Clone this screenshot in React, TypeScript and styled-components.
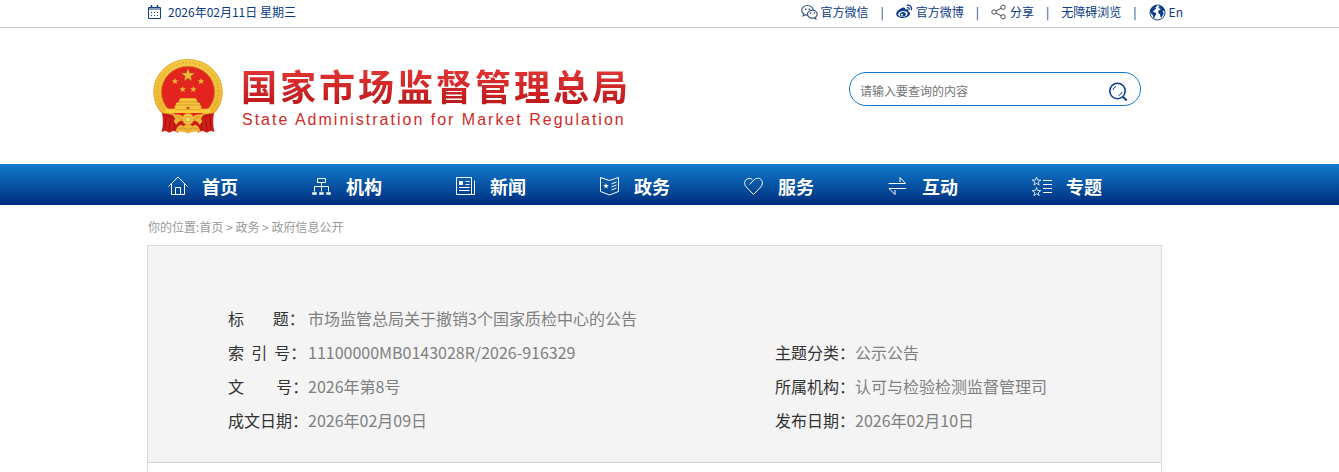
import React from "react";
import styled, { createGlobalStyle } from "styled-components";

const GlobalStyle = createGlobalStyle`
  * { box-sizing: border-box; }
  body {
    margin: 0;
    background: #fff;
    font-family: "Noto Sans CJK SC", sans-serif;
    font-size: 12px;
    color: #333;
  }
  a { color: inherit; text-decoration: none; }
  svg { display: block; flex: none; }
`;

const Page = styled.div`
  display: flex;
  flex-direction: column;
  min-height: 100vh;
`;

const Container = styled.div`
  width: 100%;
  max-width: 1045px;
  margin: 0 auto;
  padding-left: 1px;
`;

const TopBar = styled.div`
  border-bottom: 1px solid #c8c8c8;
  color: #0a3a85;
  line-height: 24px;
  padding-bottom: 3px;
`;

const TopInner = styled(Container)`
  display: flex;
  justify-content: space-between;
  padding-right: 9px;
`;

const DateText = styled.div`
  display: flex;
  align-items: center;
  gap: 7px;
`;

const QuickLinks = styled.nav`
  display: flex;
  align-items: center;
`;

const QuickLink = styled.a`
  display: flex;
  align-items: center;
  gap: 3px;
`;

const Divider = styled.span`
  padding: 0 12px;
`;

const Header = styled(Container)`
  display: flex;
  align-items: flex-start;
  justify-content: space-between;
  height: 136px;
  padding: 30px 51px 0 5px;
`;

const Brand = styled.a`
  display: flex;
  gap: 17px;
`;

const BrandText = styled.div`
  padding-top: 3px;
`;

const BrandName = styled.h1`
  margin: 0;
  font-size: 36px;
  line-height: 48px;
  font-weight: 700;
  letter-spacing: 3px;
  color: transparent;
  background: linear-gradient(#e23434 20%, #bd1a1c 90%);
  -webkit-background-clip: text;
  background-clip: text;
`;

const BrandSub = styled.p`
  margin: 0;
  padding: 1px 0 0 1px;
  font-family: "Liberation Sans", Arial, sans-serif;
  font-size: 16px;
  line-height: 20px;
  letter-spacing: 2px;
  color: #d02a28;
`;

const SearchForm = styled.form`
  display: flex;
  align-items: center;
  width: 292px;
  height: 34px;
  margin-top: 14px;
  padding: 0 12px 0 10px;
  border: 1px solid #1478c8;
  border-radius: 17px;
`;

const SearchInput = styled.input`
  flex: 1;
  min-width: 0;
  padding: 2px 0 0;
  border: 0;
  outline: 0;
  background: none;
  font: inherit;
  &::placeholder { color: #757575; }
`;

const SearchButton = styled.button`
  padding: 5px 0 0;
  border: 0;
  background: none;
  cursor: pointer;
`;

const NavBar = styled.nav`
  background: linear-gradient(#107bcd, #002d7c);
`;

const NavInner = styled(Container)`
  display: flex;
`;

const NavItem = styled.a`
  display: flex;
  align-items: center;
  gap: 14px;
  width: 144px;
  height: 41px;
  padding: 3px 0 0 20px;
  color: #fff;
  font-size: 18px;
  font-weight: 700;
`;

const Crumbs = styled(Container)`
  padding: 12px 0 8px 1px;
  line-height: 20px;
  color: #999;
`;

const Main = styled(Container)`
  display: flex;
  flex: 1;
  padding: 0 30px 0 0;
`;

const Panel = styled.main`
  flex: 1;
  border: 1px solid #d3dae5;
  border-bottom: 0;
`;

const Info = styled.dl`
  display: grid;
  grid-template-columns: 547px 1fr;
  margin: 0;
  padding: 55px 20px 25px 80px;
  background: #f4f4f4;
  border-bottom: 1px solid #d0d3d6;
  font-size: 16px;
  line-height: 34px;
`;

const Field = styled.div<{ $wide?: boolean }>`
  display: grid;
  grid-template-columns: 80px 1fr;
  grid-column: ${(p) => (p.$wide ? "1 / -1" : "auto")};
`;

const Label = styled.dt`
  white-space: pre;
  color: #333;
`;

const Value = styled.dd`
  margin: 0;
  color: #808080;
`;

const fields = [
  { label: `标${"\u00a0".repeat(8)}题：`, value: "市场监管总局关于撤销3个国家质检中心的公告", wide: true },
  { label: "索\u00a0\u00a0引\u00a0\u00a0号：", value: "11100000MB0143028R/2026-916329" },
  { label: "主题分类：", value: "公示公告" },
  { label: `文${"\u00a0".repeat(9)}号：`, value: "2026年第8号" },
  { label: "所属机构：", value: "认可与检验检测监督管理司" },
  { label: "成文日期：", value: "2026年02月09日" },
  { label: "发布日期：", value: "2026年02月10日" },
];

const star = (cx: number, cy: number, r: number) =>
  Array.from({ length: 10 }, (_, i) => {
    const a = (Math.PI / 5) * i - Math.PI / 2;
    const q = i % 2 ? r * 0.4 : r;
    return `${(cx + q * Math.cos(a)).toFixed(1)},${(cy + q * Math.sin(a)).toFixed(1)}`;
  }).join(" ");

const Emblem = () => (
  <svg width="72" height="76" viewBox="20 22 216 228" aria-hidden="true">
    <defs>
      <linearGradient id="gold" x1="0" y1="0" x2="0" y2="1">
        <stop offset="0" stopColor="#f5cc48" />
        <stop offset="1" stopColor="#eab02c" />
      </linearGradient>
    </defs>
    <ellipse cx="128" cy="124" rx="104" ry="99" fill="url(#gold)" />
    <ellipse cx="128" cy="122" rx="91" ry="86" fill="none" stroke="#e0a52a" strokeWidth="5" strokeDasharray="4 6" />
    <ellipse cx="128" cy="124" rx="103" ry="98" fill="none" stroke="#dba02a" strokeWidth="2" />
    <ellipse cx="128" cy="124" rx="80" ry="77" fill="#e3231d" stroke="#c98a1e" strokeWidth="2" />
    <polygon points={star(128, 74, 21)} fill="#ecc03c" stroke="#a86a1a" strokeWidth="1.500" />
    {[[89, 92], [167, 92], [112, 116], [144, 116]].map(([x, y]) => (
      <polygon key={x} points={star(x, y, 11)} fill="#e8b436" />
    ))}
    <path d="M100 150L105 143H151L156 150L154 154H102ZM92 158L98 154H158L164 158V164H92ZM88 164H168V178H88Z" fill="#f6c73e" />
    <path d="M98 154H158M92 163H164" stroke="#b5691a" strokeWidth="1.500" />
    <path d="M123 176V171Q128 166 133 171V176Z" fill="#c1401a" />
    <path d="M60 174H196V187H60Z" fill="#fbcb3c" />
    <path d="M88 177H168" stroke="#d18a20" strokeWidth="2" />
    <path d="M50 188Q72 190 86 194Q104 206 128 208T170 194Q184 190 206 188L204 200Q202 230 208 244L196 240L184 246L172 240L158 246L154 230Q142 226 128 226T102 230L98 246L84 240L72 246L60 240L48 244Q54 230 52 200Z" fill="#d11d19" />
    <path d="M62 200L58 236M76 206L70 240M88 212L85 238M194 200L198 236M180 206L186 240M168 212L171 238M58 192Q76 202 92 200M198 192Q180 202 164 200" fill="none" stroke="#9f1111" strokeWidth="3" />
    <path d="M82 194Q100 188 114 198L110 210Q98 210 94 222Q80 212 90 204ZM174 194Q156 188 142 198L146 210Q158 210 162 222Q176 212 166 204Z" fill="#efb836" />
    <path d="M92 197Q104 198 108 208M164 197Q152 198 148 208" fill="none" stroke="#c8821f" strokeWidth="2" />
    <circle cx="128" cy="205" r="17" fill="#f4c443" stroke="#d69a2c" strokeWidth="2" />
    <circle cx="128" cy="206" r="8" fill="#f9d66a" stroke="#cb8a26" strokeWidth="2" />
    <path d="M94 234Q102 218 114 226Q128 216 142 226Q154 218 162 234L166 243Q146 240 128 248Q110 240 90 243Z" fill="#ecb637" />
    <path d="M100 236Q116 226 128 240Q140 226 156 236" fill="none" stroke="#c17b1c" strokeWidth="2" />
  </svg>
);

const CalendarIcon = () => (
  <svg width="13" height="14" viewBox="0 0 13 14" fill="none" stroke="#123f85" aria-hidden="true">
    <path d="M.5 2.500h12v11H.5zM.5 4h12" />
    <path d="M3.500 0v3M9.500 0v3" strokeWidth="1.500" />
    <path d="M3 7.500h8M3 10.500h8" strokeDasharray="1 2" />
  </svg>
);

const WechatIcon = () => (
  <svg width="17" height="16" viewBox="0 0 17 16" fill="#fff" stroke="#35577f" strokeWidth="1.200" aria-hidden="true">
    <path d="M6.500 1.500C3.300 1.500.7 3.600.7 6.300c0 1.500.8 2.800 2.100 3.700l-.5 1.900 2.100-1.100c.7.200 1.400.3 2.100.3 3.200 0 5.800-2.100 5.800-4.800S9.700 1.500 6.500 1.500z" />
    <path d="M11.400 6.200c-2.700 0-4.900 1.800-4.900 4s2.200 4 4.900 4c.6 0 1.100-.1 1.600-.2l1.800.9-.4-1.600c1.100-.7 1.800-1.800 1.800-3.100 0-2.200-2.100-4-4.800-4z" />
    <path d="M4 5.300h1.500M7.600 5.300h1.500M9 9h1.300M12.600 9h1.300" strokeWidth="1.500" />
  </svg>
);

const WeiboIcon = () => (
  <svg width="17" height="16" viewBox="0 0 17 16" fill="none" stroke="#0b3c8c" aria-hidden="true">
    <path fillRule="evenodd" fill="#0b3c8c" stroke="none" d="M6.500 3.800c1.100-.5 2.200-.4 2.500.4.200.4.100.9-.1 1.400 1.700-.7 3.200-.5 3.500.5.200.5 0 1-.2 1.500 1.100.3 1.800 1 1.800 2 0 2.400-3.200 4.400-7 4.400S.2 12.400.2 10C.2 7.800 3.200 5 6.500 3.800zM6.700 7.100C4 7.300 2 8.800 2.200 10.500s2.400 2.700 5 2.400 4.600-1.800 4.400-3.500-2.300-2.500-4.900-2.300z" />
    <path fillRule="evenodd" fill="#0b3c8c" stroke="none" d="M6.300 8c1.700-.4 3.200.4 3.500 1.700s-.8 2.500-2.400 2.800-3.200-.4-3.500-1.600.8-2.500 2.400-2.900zM6 9.700a1 1 0 100 2 1 1 0 000-2z" />
    <path d="M10.700 1.300c3-.8 5.600 1.800 4.700 4.900M11 3.700c1.500-.3 2.600.8 2.200 2.200" strokeWidth="1.300" />
  </svg>
);

const ShareIcon = () => (
  <svg width="16" height="16" viewBox="0 0 16 16" fill="none" stroke="#4a4a4a" aria-hidden="true">
    <circle cx="3" cy="8" r="2.200" />
    <circle cx="12" cy="3.200" r="2.200" />
    <circle cx="12" cy="12.800" r="2.200" />
    <path d="M5 7l5-2.700M5 9l5 2.700" />
  </svg>
);

const GlobeIcon = () => (
  <svg width="17" height="17" viewBox="0 0 17 17" aria-hidden="true">
    <circle cx="8.500" cy="8.500" r="7.500" fill="#fff" stroke="#0b3c8c" />
    <path fill="#0b3c8c" d="M1.500 5.500L4 2.400l3-1.200 1 1.200-1.800.9.900 1.300-1.500 1.100-.9 1.400-1.200.5 1.600.6 2 .9.200 1.300-1.400 1.700-.5 2.400-1.100-.9-.6-2.700-1.600-1.600L1.300 7.500zM10 2.300l2.600-.3L15 4.400l1 2.600-.9.300-.7-.9-.9.900 1.200 1.800-.8 2.100-1.700 2.300-.9-.8-.2-2.400-1.500-.7-.6-1.800 1-1.500 1.500-.5-.2-1-1.700-.6z" />
  </svg>
);

const SearchIcon = () => (
  <svg width="20" height="20" viewBox="0 0 20 20" fill="none" stroke="#0d3f8f" aria-hidden="true">
    <circle cx="9.500" cy="9" r="7.700" strokeWidth="1.600" />
    <path d="M14.500 14.500l4.300 4" strokeWidth="2" />
    <path d="M5 8a5 5 0 013-3.600M14 10a5 5 0 01-3.500 3.600" />
  </svg>
);

const navIcons: Record<string, React.ReactNode> = {
  home: <path d="M.5 10.500L10 1l9.500 9.500M3.500 8v10.500h13V8M7.500 18.500v-7h5v7" />,
  org: (
    <>
      <path d="M5.500 2.500h8v4h-8zM9.500 6.500v9M2.500 15.500v-5h14v5" />
      <path d="M.5 16.500h4v2h-4zM7.500 16.500h4v2h-4zM14.500 16.500h4v2h-4z" fill="currentColor" strokeWidth=".5" />
    </>
  ),
  news: (
    <>
      <path d="M.5 1.500h15v17H.5zM18.500 4.500v14h-3M9.500 5.500h4M9.500 8.500h4M3 11.500h10.500M3 14.500h10.500" />
      <path d="M3 5h4v4H3z" fill="currentColor" stroke="none" />
    </>
  ),
  policy: (
    <>
      <path d="M.5 1.500l9 3 9-3v14l-9 3.500-9-3.500zM11.500 8l5-2M11.500 11l5-2M11.500 14l5-2" />
      <polygon points={star(6, 10, 3)} fill="currentColor" stroke="none" />
    </>
  ),
  service: <path d="M5.500 8.500l4.500-4.500C12 1.800 15.200 1.700 17 3.500s1.900 5.200-.3 7.500L9.500 18.500 2.300 11C.2 8.800.2 5.500 2 3.700 3.800 2 6.800 2.100 8.300 3.500" />,
  interact: <path d="M.5 7.500h17L12 1.500v4.500M18 12.500H1l6 6V14" />,
  topic: (
    <>
      <polygon points={star(4.500, 5.500, 4.500)} strokeOpacity=".8" />
      <polygon points={star(4.500, 16, 4.500)} strokeOpacity=".8" />
      <path d="M11 4.500h9M11 8.500h9M11 12.500h9M11 16.500h9" />
    </>
  ),
};

const nav = [
  ["home", "首页"],
  ["org", "机构"],
  ["news", "新闻"],
  ["policy", "政务"],
  ["service", "服务"],
  ["interact", "互动"],
  ["topic", "专题"],
];

export default function App() {
  return (
    <Page>
      <GlobalStyle />
      <TopBar>
        <TopInner>
          <DateText>
            <CalendarIcon />
            2026年02月11日 星期三
          </DateText>
          <QuickLinks>
            <QuickLink href="#"><WechatIcon />官方微信</QuickLink>
            <Divider>|</Divider>
            <QuickLink href="#"><WeiboIcon />官方微博</QuickLink>
            <Divider>|</Divider>
            <QuickLink href="#"><ShareIcon />分享</QuickLink>
            <Divider>|</Divider>
            <QuickLink href="#">无障碍浏览</QuickLink>
            <Divider>|</Divider>
            <QuickLink href="#"><GlobeIcon />En</QuickLink>
          </QuickLinks>
        </TopInner>
      </TopBar>
      <Header as="header">
        <Brand href="#">
          <Emblem />
          <BrandText>
            <BrandName>国家市场监督管理总局</BrandName>
            <BrandSub>State Administration for Market Regulation</BrandSub>
          </BrandText>
        </Brand>
        <SearchForm role="search" onSubmit={(e) => e.preventDefault()}>
          <SearchInput type="text" aria-label="请输入要查询的内容" placeholder="请输入要查询的内容" />
          <SearchButton type="submit" aria-label="搜索"><SearchIcon /></SearchButton>
        </SearchForm>
      </Header>
      <NavBar>
        <NavInner>
          {nav.map(([icon, text]) => (
            <NavItem key={icon} href="#">
              <svg width="20" height="20" viewBox="0 0 20 20" fill="none" stroke="currentColor" overflow="visible" aria-hidden="true">
                {navIcons[icon]}
              </svg>
              {text}
            </NavItem>
          ))}
        </NavInner>
      </NavBar>
      <Crumbs>
        你的位置:<a href="#">首页</a> &gt; <a href="#">政务</a> &gt; <a href="#">政府信息公开</a>
      </Crumbs>
      <Main>
        <Panel>
          <Info>
            {fields.map((f) => (
              <Field key={f.label} $wide={f.wide}>
                <Label>{f.label}</Label>
                <Value>{f.value}</Value>
              </Field>
            ))}
          </Info>
        </Panel>
      </Main>
    </Page>
  );
}
